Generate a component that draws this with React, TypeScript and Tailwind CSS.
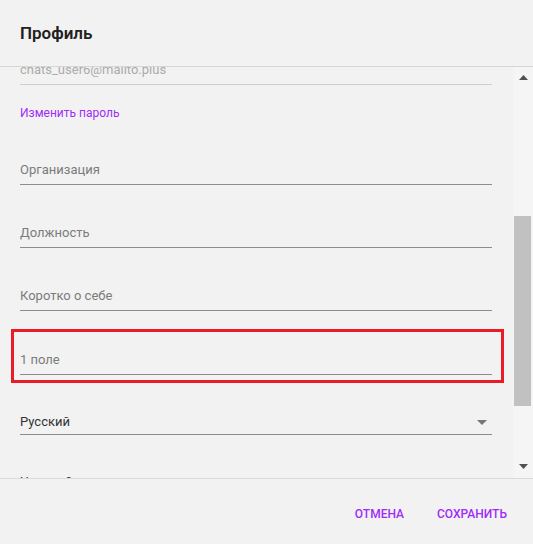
const fields = [
  { label: "Организация", top: "mt-[41px]" },
  { label: "Должность", top: "mt-[40px]" },
  { label: "Коротко о себе", top: "mt-[40px]" },
];

function Field({ label, className }: { label: string; className?: string }) {
  return (
    <div className={className}>
      <div className="text-[13px] leading-4 text-[#7b7b7b]">{label}</div>
      <div className="mt-[6px] h-px bg-[#8c8c8c]" />
    </div>
  );
}

function Arrow({ down }: { down?: boolean }) {
  return (
    <svg width="9" height="5" viewBox="0 0 9 5" className="block">
      <polygon points={down ? "0,0 9,0 4.5,5" : "0,5 9,5 4.5,0"} fill="#505050" />
    </svg>
  );
}

export default function App() {
  return (
    <div className="flex h-[544px] w-[533px] flex-col overflow-hidden bg-[#f2f2f2] font-['Roboto',sans-serif]">
      <div className="flex h-[67px] shrink-0 items-center border-b border-[#d6d6d6] px-5 pt-[2px]">
        <h2 className="text-[17px] font-semibold text-[#212121]">Профиль</h2>
      </div>

      <div className="flex min-h-0 flex-1">
        <div className="min-w-0 flex-1 overflow-hidden pl-5 pr-[21px]">
          <div className="-mt-[5px]">
            <div>
              <div className="text-[13px] leading-4 text-[#ababab]">chats_user6@mailto.plus</div>
              <div className="mt-[6px] h-px bg-[#cfcfcf]" />
            </div>

            <div className="mt-[20px] text-[12px] leading-4 text-[#a12bf7]">Изменить пароль</div>

            {fields.map((f) => (
              <Field key={f.label} label={f.label} className={f.top} />
            ))}

            <div className="-ml-[9px] -mr-[12px] mt-[18px] border-[3px] border-[#ea1c26] pb-[5px] pl-[6px] pr-[9px] pt-[20px]">
              <Field label="1 поле" />
            </div>

            <div className="mt-[31px]">
              <div className="flex items-center justify-between text-[13px] leading-4 text-[#333]">
                <span>Русский</span>
                <svg width="10" height="5" viewBox="0 0 10 5" className="mr-[5px]">
                  <polygon points="0,0 10,0 5,5" fill="#777" />
                </svg>
              </div>
              <div className="mt-[4px] h-px bg-[#8c8c8c]" />
            </div>

            <div className="mt-[39px] text-[13px] leading-4 text-[#333]">Часовой пояс</div>
          </div>
        </div>

        <div className="flex w-[20px] shrink-0 flex-col bg-[#f5f5f5]">
          <div className="flex h-[17px] items-center justify-center pt-[4px]">
            <Arrow />
          </div>
          <div className="ml-[1px] mt-[132px] h-[190px] w-[17px] bg-[#c1c1c1]" />
          <div className="flex-1" />
          <div className="flex h-[17px] items-center justify-center pb-[6px]">
            <Arrow down />
          </div>
        </div>
      </div>

      <div className="flex h-[66px] shrink-0 items-start justify-end gap-[33px] border-t border-[#dadada] pr-[26px] pt-[27px]">
        <button className="text-[12px] font-medium uppercase leading-4 text-[#a12bf7]">Отмена</button>
        <button className="text-[12px] font-medium uppercase leading-4 text-[#a12bf7]">Сохранить</button>
      </div>
    </div>
  );
}
